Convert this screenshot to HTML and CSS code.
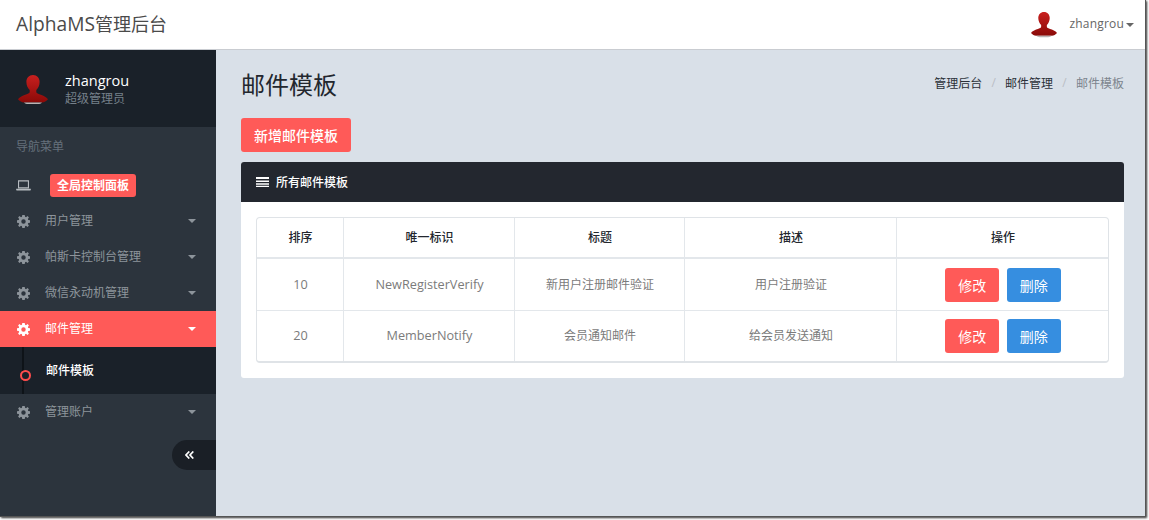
FILE: index.html
```html
<!DOCTYPE html>
<html lang="zh-CN">
<head>
    <meta charset="UTF-8">
    <title>AlphaMS管理后台</title>
    <link rel="stylesheet" href="styles.css">
</head>
<body>
    <svg class="icon-defs" width="0" height="0">
        <defs>
            <linearGradient id="avatarRed" x1="0" y1="0" x2="0" y2="1">
                <stop offset="0" stop-color="#c9201f"/>
                <stop offset="1" stop-color="#8a0a08"/>
            </linearGradient>
            <symbol id="avatar" viewBox="0 0 30 30">
                <path fill="url(#avatarRed)" d="M15 0c4 0 6.600 3 6.600 7 0 3.400-1.500 6.300-3.300 8v2.200c0 1 3 1.900 5.800 3.100 2.300 1 4.600 2.200 5.900 3.900-1.500 1.600-3.800 3.300-6 3.300H6c-2.200 0-4.500-1.700-6-3.300 1.300-1.700 3.600-2.900 5.900-3.900 2.800-1.200 5.800-2.100 5.800-3.100V15c-1.800-1.700-3.300-4.600-3.300-8 0-4 2.600-7 6.600-7z"/>
                <path fill="#b9b4b4" d="M6 27.500h18c-1 1-2.500 1.500-4 1.500H10c-1.500 0-3-.5-4-1.500z"/>
            </symbol>
            <symbol id="gear" viewBox="0 0 14 14">
                <path fill="currentColor" fill-rule="evenodd" d="M5.700 0h2.600l.4 1.900 1 .4L11.400 1.200l1.400 1.400-1.100 1.700.4 1 1.900.4v2.600l-1.900.4-.4 1 1.100 1.700-1.400 1.400-1.700-1.100-1 .4-.4 1.900H5.700l-.4-1.900-1-.4-1.700 1.100-1.400-1.400 1.100-1.700-.4-1L0 8.300V5.700l1.900-.4.4-1-1.100-1.700 1.400-1.400 1.700 1.100 1-.4zM7 4.600a2.400 2.400 0 1 0 0 4.800 2.400 2.400 0 0 0 0-4.800z"/>
            </symbol>
        </defs>
    </svg>

    <div class="frame">
        <header class="topbar">
            <div class="brand"><span class="brand-latin">AlphaMS</span>管理后台</div>
            <div class="top-user">
                <svg class="top-avatar"><use href="#avatar"/></svg>
                <span class="top-name">zhangrou</span>
                <i class="caret caret-small"></i>
            </div>
        </header>

        <div class="layout">
            <aside class="sidebar">
                <div class="user-panel">
                    <svg class="side-avatar"><use href="#avatar"/></svg>
                    <div class="user-info">
                        <div class="user-name">zhangrou</div>
                        <div class="user-role">超级管理员</div>
                    </div>
                </div>

                <div class="nav-title">导航菜单</div>
                <ul class="nav">
                    <li class="nav-item nav-dash">
                        <svg class="nav-icon" viewBox="0 0 16 12">
                            <path fill="none" stroke="currentColor" stroke-width="1.200" d="M2.600 1h10.800v7.600H2.600z"/>
                            <path fill="currentColor" d="M0 9.500h16v1.200c0 .4-.3.7-.7.7H.7c-.4 0-.7-.3-.7-.7z"/>
                        </svg>
                        <span class="dash-badge">全局控制面板</span>
                    </li>
                    <li class="nav-item">
                        <svg class="nav-icon gear"><use href="#gear"/></svg>
                        <span class="nav-text">用户管理</span>
                        <i class="caret"></i>
                    </li>
                    <li class="nav-item">
                        <svg class="nav-icon gear"><use href="#gear"/></svg>
                        <span class="nav-text">帕斯卡控制台管理</span>
                        <i class="caret"></i>
                    </li>
                    <li class="nav-item">
                        <svg class="nav-icon gear"><use href="#gear"/></svg>
                        <span class="nav-text">微信永动机管理</span>
                        <i class="caret"></i>
                    </li>
                    <li class="nav-item active">
                        <svg class="nav-icon gear"><use href="#gear"/></svg>
                        <span class="nav-text">邮件管理</span>
                        <i class="caret"></i>
                    </li>
                    <li class="subnav">
                        <span class="sub-dot"></span>
                        <span class="sub-text">邮件模板</span>
                    </li>
                    <li class="nav-item">
                        <svg class="nav-icon gear"><use href="#gear"/></svg>
                        <span class="nav-text">管理账户</span>
                        <i class="caret"></i>
                    </li>
                </ul>

                <div class="collapse-row">
                    <div class="collapse-btn">
                        <svg width="9" height="8" viewBox="0 0 9 8">
                            <path fill="none" stroke="#fff" stroke-width="1.700" d="M4.300 .5 1 4l3.300 3.500M8.300 .5 5 4l3.300 3.500"/>
                        </svg>
                    </div>
                </div>
            </aside>

            <main class="content">
                <div class="page-head">
                    <h1>邮件模板</h1>
                    <ol class="crumbs">
                        <li>管理后台</li>
                        <li class="sep">/</li>
                        <li>邮件管理</li>
                        <li class="sep">/</li>
                        <li class="current">邮件模板</li>
                    </ol>
                </div>

                <button class="btn btn-red btn-add">新增邮件模板</button>

                <section class="panel">
                    <div class="panel-head">
                        <svg width="13" height="10" viewBox="0 0 13 10">
                            <path fill="#fff" d="M0 0h13v2H0zM0 3.500h13v1.500H0zM0 6.300h13v1.500H0zM0 8.800h13V10H0z"/>
                        </svg>
                        <span>所有邮件模板</span>
                    </div>
                    <div class="panel-body">
                        <table class="grid">
                            <colgroup>
                                <col class="col-order">
                                <col class="col-key">
                                <col class="col-title">
                                <col class="col-desc">
                                <col class="col-ops">
                            </colgroup>
                            <thead>
                                <tr>
                                    <th>排序</th>
                                    <th>唯一标识</th>
                                    <th>标题</th>
                                    <th>描述</th>
                                    <th>操作</th>
                                </tr>
                            </thead>
                            <tbody>
                                <tr>
                                    <td class="latin-cell">10</td>
                                    <td class="latin-cell">NewRegisterVerify</td>
                                    <td>新用户注册邮件验证</td>
                                    <td>用户注册验证</td>
                                    <td class="ops-cell">
                                        <button class="btn btn-red">修改</button>
                                        <button class="btn btn-blue">删除</button>
                                    </td>
                                </tr>
                                <tr>
                                    <td class="latin-cell">20</td>
                                    <td class="latin-cell">MemberNotify</td>
                                    <td>会员通知邮件</td>
                                    <td>给会员发送通知</td>
                                    <td class="ops-cell">
                                        <button class="btn btn-red">修改</button>
                                        <button class="btn btn-blue">删除</button>
                                    </td>
                                </tr>
                            </tbody>
                        </table>
                    </div>
                </section>
            </main>
        </div>
    </div>
</body>
</html>
```

FILE: styles.css
```css
* {
    box-sizing: border-box;
}

html, body {
    margin: 0;
    padding: 0;
    height: 520px;
    overflow: hidden;
    background-color: #fff;
}

body {
    font-family: "Open Sans", "Noto Sans CJK SC", sans-serif;
    font-size: 12px;
    color: #797979;
}

.icon-defs {
    display: block;
    height: 0;
}

/* page sits on a white canvas with a window shadow on the right and bottom */
.frame {
    width: 1146px;
    height: 517px;
    display: flex;
    flex-direction: column;
    box-shadow: 1px 1px 2px #333;
    border-right: 1px solid #555;
    border-bottom: 1px solid #555;
}

.topbar {
    height: 50px;
    flex: none;
    display: flex;
    justify-content: space-between;
    align-items: center;
    padding: 0 11px 0 16px;
    background-color: #fff;
    border-bottom: 1px solid #c9ccd1;
}

.brand {
    padding-bottom: 2px;
    font-size: 18px;
    color: #4a4a4a;
}

.brand-latin {
    font-size: 19.200px;
}

.top-user {
    display: flex;
    align-items: center;
    color: #666;
    letter-spacing: .2px;
}

.top-name {
    padding-bottom: 2px;
}

.top-avatar {
    width: 26px;
    height: 26px;
    margin-right: 12px;
}

.layout {
    flex: 1;
    display: flex;
    min-height: 0;
}

.sidebar {
    width: 216px;
    flex: none;
    background-color: #2c343d;
}

.user-panel {
    height: 77px;
    display: flex;
    align-items: center;
    padding-left: 18px;
    background-color: #1a2129;
}

.side-avatar {
    width: 30px;
    height: 30px;
    margin: 2px 17px 0 0;
}

.user-info {
    padding-top: 2px;
}

.user-name {
    font-size: 14.500px;
    line-height: 18px;
    color: #fff;
}

.user-role {
    margin-top: 1px;
    line-height: 16px;
    color: #76808a;
}

.nav-title {
    height: 40px;
    padding-left: 16px;
    line-height: 40px;
    color: #65707b;
}

.nav {
    list-style: none;
    margin: 0;
    padding: 0;
}

.nav-item {
    height: 36px;
    display: flex;
    align-items: center;
    padding: 0 20px 0 17px;
    color: #8d949b;
}

.nav-dash {
    color: #b6bbc0;
    padding-left: 16px;
}

.nav-icon {
    width: 15px;
    height: 11px;
    flex: none;
    margin-right: 19px;
}

.gear {
    width: 13px;
    height: 13px;
    margin-right: 15px;
}

.dash-badge {
    padding: 0 7px;
    height: 23px;
    line-height: 23px;
    border-radius: 3px;
    background-color: #ff5a58;
    color: #fff;
    font-weight: 700;
}

.nav-text {
    flex: 1;
    padding-bottom: 2px;
}

.caret {
    width: 0;
    height: 0;
    border-left: 4px solid transparent;
    border-right: 4px solid transparent;
    border-top: 4px solid currentColor;
}

.caret-small {
    margin-left: 2px;
}

.active {
    background-color: #ff5a58;
    color: #fff;
}

.subnav {
    position: relative;
    height: 47px;
    padding-left: 46px;
    background-color: #1a2129;
    color: #fff;
    font-weight: 500;
    line-height: 47px;
}

/* vertical line behind the dot */
.subnav::before {
    content: "";
    position: absolute;
    left: 22px;
    top: 0;
    bottom: 0;
    width: 2px;
    background-color: #0e1318;
}

.sub-dot {
    position: absolute;
    left: 20px;
    top: 23px;
    width: 11px;
    height: 11px;
    border: 2px solid #ff4d4d;
    border-radius: 50%;
    background-color: #1a2129;
}

.collapse-row {
    display: flex;
    justify-content: flex-end;
    margin-top: 10px;
}

.collapse-btn {
    width: 44px;
    height: 30px;
    padding-left: 13px;
    display: flex;
    align-items: center;
    border-radius: 15px 0 0 15px;
    background-color: #1a1f26;
}

.content {
    flex: 1;
    padding: 0 21px 0 25px;
    background-color: #d9e0e8;
}

.page-head {
    height: 68px;
    padding-bottom: 2px;
    display: flex;
    justify-content: space-between;
    align-items: center;
}

h1 {
    margin: 0;
    font-size: 24px;
    font-weight: 400;
    color: #23272e;
}

.crumbs {
    list-style: none;
    display: flex;
    margin: 0;
    padding: 0;
    color: #2b3038;
}

.sep {
    margin: 0 9.250px;
    color: #b9bec5;
}

.current {
    color: #7d858e;
}

.btn {
    height: 34px;
    border: none;
    border-radius: 3px;
    padding: 0 13px;
    font-family: inherit;
    font-size: 14px;
    color: #fff;
}

.btn-red {
    background-color: #ff5a58;
}

.btn-blue {
    margin-left: 4.500px;
    background-color: #368ee0;
}

.btn-add {
    display: block;
    width: 110px;
    padding: 0;
    font-weight: 500;
}

.panel {
    margin-top: 10px;
    border-radius: 3px;
    background-color: #fff;
}

.panel-head {
    height: 40px;
    display: flex;
    align-items: center;
    padding-left: 15px;
    border-radius: 3px 3px 0 0;
    background-color: #23272f;
    color: #fff;
    font-weight: 500;
}

.panel-head svg {
    margin-right: 7px;
}

.panel-body {
    padding: 15px;
}

.grid {
    width: 853px;
    table-layout: fixed;
    border-collapse: separate;
    border-spacing: 0;
    border: 1px solid #dfe3e7;
    border-bottom-width: 2px;
    border-radius: 4px;
}

.col-order { width: 86px; }
.col-key { width: 171px; }
.col-title { width: 170px; }
.col-desc { width: 212px; }

.grid th,
.grid td {
    text-align: center;
    border-left: 1px solid #e3e7eb;
    padding: 0 0 2px 1px;
}

.grid th:first-child,
.grid td:first-child {
    border-left: none;
}

.grid th {
    height: 41px;
    color: #23272e;
    font-weight: 500;
    border-bottom: 2px solid #e3e7eb;
}

.grid td {
    height: 51px;
    color: #7b7b7b;
}

.grid .ops-cell {
    padding: 0 0 0 1px;
}

.grid .latin-cell {
    font-size: 12.700px;
}

.grid tbody tr + tr td {
    border-top: 1px solid #e3e7eb;
}
```
